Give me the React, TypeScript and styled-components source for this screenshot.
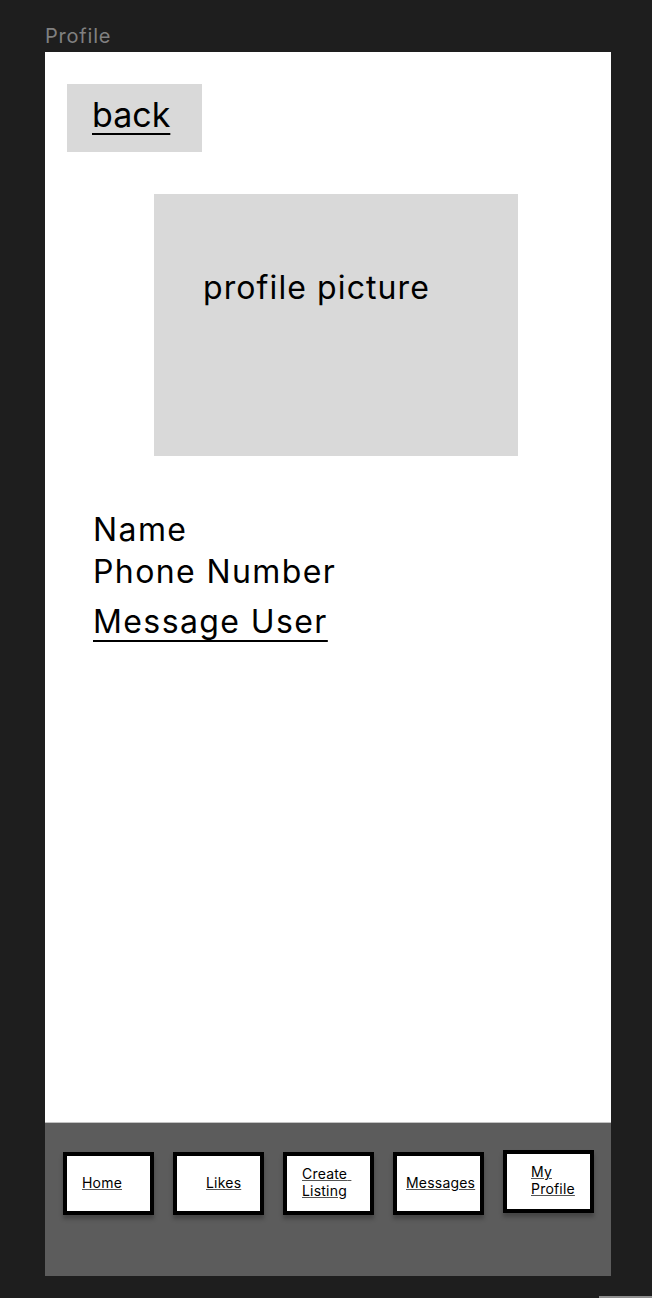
import styled, { createGlobalStyle } from "styled-components"

const GlobalStyle = createGlobalStyle`
  body {
    margin: 0;
    background: #1e1e1e;
    font-family: Inter, "Noto Sans", sans-serif;
  }
`

const Canvas = styled.div`
  padding-left: 45px;
  width: 607px;
  min-height: 1298px;
  overflow: hidden;
`

const FrameLabel = styled.div`
  padding-top: 24px;
  height: 28px;
  font-size: 20px;
  line-height: 24px;
  letter-spacing: 0.8px;
  color: #808080;
`

const Frame = styled.main`
  width: 566px;
  height: 1224px;
  background: #ffffff;
  display: flex;
  flex-direction: column;
`

const Content = styled.div`
  flex: 1;
  display: flex;
  flex-direction: column;
  align-items: flex-start;
  padding: 32px 0 0 22px;
`

const BackButton = styled.a`
  box-sizing: border-box;
  width: 135px;
  height: 68px;
  padding: 9px 0 0 25px;
  background: #d9d9d9;
  color: #000;
  font-size: 34px;
  line-height: 44px;
  text-decoration: underline;
  text-underline-offset: 6px;
  text-decoration-thickness: 2px;
`

const PictureBox = styled.div`
  box-sizing: border-box;
  width: 364px;
  height: 262px;
  margin: 42px 0 0 87px;
  padding: 74px 0 0 49px;
  background: #d9d9d9;
  font-size: 32px;
  line-height: 39px;
  letter-spacing: 1.1px;
  color: #000;
`

const Info = styled.div`
  display: flex;
  flex-direction: column;
  margin: 53px 0 0 26px;
  font-size: 32px;
  letter-spacing: 1.4px;
  color: #000;
`

const InfoLine = styled.div`
  line-height: 42px;
`

const MessageLink = styled.a`
  margin-top: 8px;
  line-height: 42px;
  color: #000;
  text-decoration: underline;
  text-underline-offset: 7px;
  text-decoration-thickness: 2px;
`

const NavBar = styled.nav`
  box-sizing: border-box;
  height: 154px;
  display: flex;
  align-items: flex-start;
  gap: 19px;
  padding: 29px 0 0 18px;
  background: #5c5c5c;
  border-top: 1px solid #c2c2c2;
`

const NavButton = styled.a<{ $indent: number; $lift?: boolean }>`
  box-sizing: border-box;
  width: 91px;
  height: 63px;
  margin-top: ${({ $lift }) => ($lift ? "-2px" : "0")};
  display: flex;
  align-items: center;
  padding: 0 4px 3px ${({ $indent }) => $indent}px;
  background: #ffffff;
  border: 4px solid #000;
  box-shadow: 0 4px 4px rgba(0, 0, 0, 0.25);
  font-size: 14px;
  line-height: 17px;
  letter-spacing: 0.2px;
  color: #000;
  text-decoration: underline;
  text-decoration-color: #555;
`

const NextFrame = styled.div`
  width: 53px;
  height: 2px;
  margin: 20px 0 0 554px;
  background: #8f8f8f;
`

export default function App() {
  return (
    <>
      <GlobalStyle />
      <Canvas>
        <FrameLabel>Profile</FrameLabel>
        <Frame>
          <Content>
            <BackButton>back</BackButton>
            <PictureBox>profile picture</PictureBox>
            <Info>
              <InfoLine>Name</InfoLine>
              <InfoLine>Phone Number</InfoLine>
              <MessageLink>Message User</MessageLink>
            </Info>
          </Content>
          <NavBar>
            <NavButton $indent={15}>Home</NavButton>
            <NavButton $indent={29}>Likes</NavButton>
            <NavButton $indent={15}>
              Create{"\u00a0"}
              <br />
              Listing
            </NavButton>
            <NavButton $indent={9}>Messages</NavButton>
            <NavButton $indent={24} $lift>
              My Profile
            </NavButton>
          </NavBar>
        </Frame>
        <NextFrame />
      </Canvas>
    </>
  )
}
